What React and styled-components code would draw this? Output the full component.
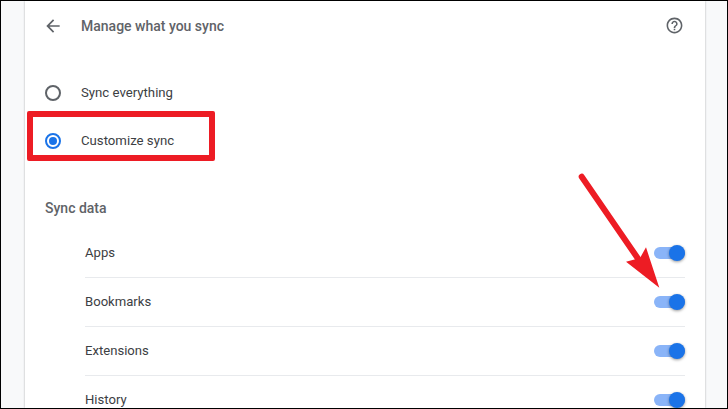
import React from 'react';
import styled, { createGlobalStyle } from 'styled-components';

const GlobalStyle = createGlobalStyle`
  html, body {
    margin: 0;
    padding: 0;
    background: #f8f9fa;
    overflow: hidden;
  }
`;

const Page = styled.div`
  position: relative;
  box-sizing: border-box;
  width: 728px;
  height: 409px;
  overflow: hidden;
  display: flex;
  padding-left: 24px;
  background: #f8f9fa;
  border: 1px solid #000;
  font-family: Roboto, 'Liberation Sans', sans-serif;
  color: #3c4043;
`;

const Card = styled.main`
  box-sizing: border-box;
  width: 680px;
  flex: none;
  background: #fff;
  box-shadow: 0 0 2px rgba(60, 64, 67, 0.4);
  padding: 0 20px;
`;

const Header = styled.header`
  display: flex;
  align-items: center;
  height: 49px;
  color: #5f6368;
`;

const Title = styled.h1`
  flex: 1;
  margin: 0 0 0 18px;
  font-size: 14px;
  font-weight: 500;
  color: #5f6368;
`;

const BackIcon = styled.svg`
  margin-left: -2px;
  flex: none;
`;

const HelpIcon = styled.svg`
  margin-right: 1px;
  flex: none;
`;

const RadioGroup = styled.div`
  display: flex;
  flex-direction: column;
  padding-top: 18px;
`;

const RadioRow = styled.label`
  display: flex;
  align-items: center;
  gap: 20px;
  height: 48px;
  font-size: 13.2px;
`;

const RadioDot = styled.span`
  box-sizing: border-box;
  width: 16px;
  height: 16px;
  margin-top: 2px;
  border-radius: 50%;
  border: 2px solid ${(props) => (props.checked ? '#1a73e8' : '#5f6368')};
  display: flex;
  align-items: center;
  justify-content: center;

  &::after {
    content: '';
    display: ${(props) => (props.checked ? 'block' : 'none')};
    width: 8px;
    height: 8px;
    border-radius: 50%;
    background: #1a73e8;
  }
`;

const SectionTitle = styled.h2`
  margin: 0;
  padding-top: 35px;
  height: 30px;
  font-size: 14px;
  font-weight: 500;
  line-height: 18px;
  color: #5f6368;
`;

const List = styled.ul`
  list-style: none;
  margin: 0;
  padding: 0 0 0 40px;
`;

const Row = styled.li`
  display: flex;
  align-items: center;
  justify-content: space-between;
  height: 48px;
  border-bottom: 1px solid #e8eaed;

  &:last-child {
    border-bottom: none;
  }
`;

const RowLabel = styled.span`
  margin-bottom: 2px;
  font-size: 13.1px;
`;

const Switch = styled.span`
  position: relative;
  display: block;
  width: 31px;
  height: 12px;
  border-radius: 6px;
  background: #8ab4f8;

  &::after {
    content: '';
    position: absolute;
    top: -2px;
    right: 0;
    width: 16px;
    height: 16px;
    border-radius: 50%;
    background: #1a73e8;
    box-shadow: 0 1px 3px rgba(0, 0, 0, 0.4);
  }
`;

const Highlight = styled.div`
  position: absolute;
  left: 26px;
  top: 110px;
  width: 176px;
  height: 38px;
  border: 6px solid #ed1c24;
  border-radius: 2px;
`;

const ArrowLayer = styled.svg`
  position: absolute;
  left: 570px;
  top: 165px;
`;

const rows = ['Apps', 'Bookmarks', 'Extensions', 'History'];

export default function App() {
  return (
    <Page>
      <GlobalStyle />
      <Card>
        <Header>
          <BackIcon width="20" height="20" viewBox="0 0 24 24" fill="currentColor">
            <path d="M20 11H7.83l5.59-5.59L12 4l-8 8 8 8 1.41-1.41L7.83 13H20v-2z" />
          </BackIcon>
          <Title>Manage what you sync</Title>
          <HelpIcon width="19" height="19" viewBox="0 0 24 24" fill="currentColor">
            <path d="M11 18h2v-2h-2v2zm1-16C6.48 2 2 6.48 2 12s4.48 10 10 10 10-4.48 10-10S17.52 2 12 2zm0 18c-4.41 0-8-3.59-8-8s3.59-8 8-8 8 3.59 8 8-3.59 8-8 8zm0-14c-2.21 0-4 1.79-4 4h2c0-1.1.9-2 2-2s2 .9 2 2c0 2-3 1.75-3 5h2c0-2.25 3-2.5 3-5 0-2.21-1.79-4-4-4z" />
          </HelpIcon>
        </Header>
        <RadioGroup>
          <RadioRow>
            <RadioDot />
            Sync everything
          </RadioRow>
          <RadioRow>
            <RadioDot checked />
            Customize sync
          </RadioRow>
        </RadioGroup>
        <SectionTitle>Sync data</SectionTitle>
        <List>
          {rows.map((name) => (
            <Row key={name}>
              <RowLabel>{name}</RowLabel>
              <Switch />
            </Row>
          ))}
        </List>
      </Card>
      <Highlight />
      <ArrowLayer width="100" height="130" viewBox="0 0 100 130">
        <path d="M10.7 10.7 L 70 97" stroke="#ed1c24" strokeWidth="6" strokeLinecap="round" fill="none" />
        <path d="M88.3 121.7 L 75 81.3 L 69 92 L 55 95.7 Z" fill="#ed1c24" />
      </ArrowLayer>
    </Page>
  );
}
